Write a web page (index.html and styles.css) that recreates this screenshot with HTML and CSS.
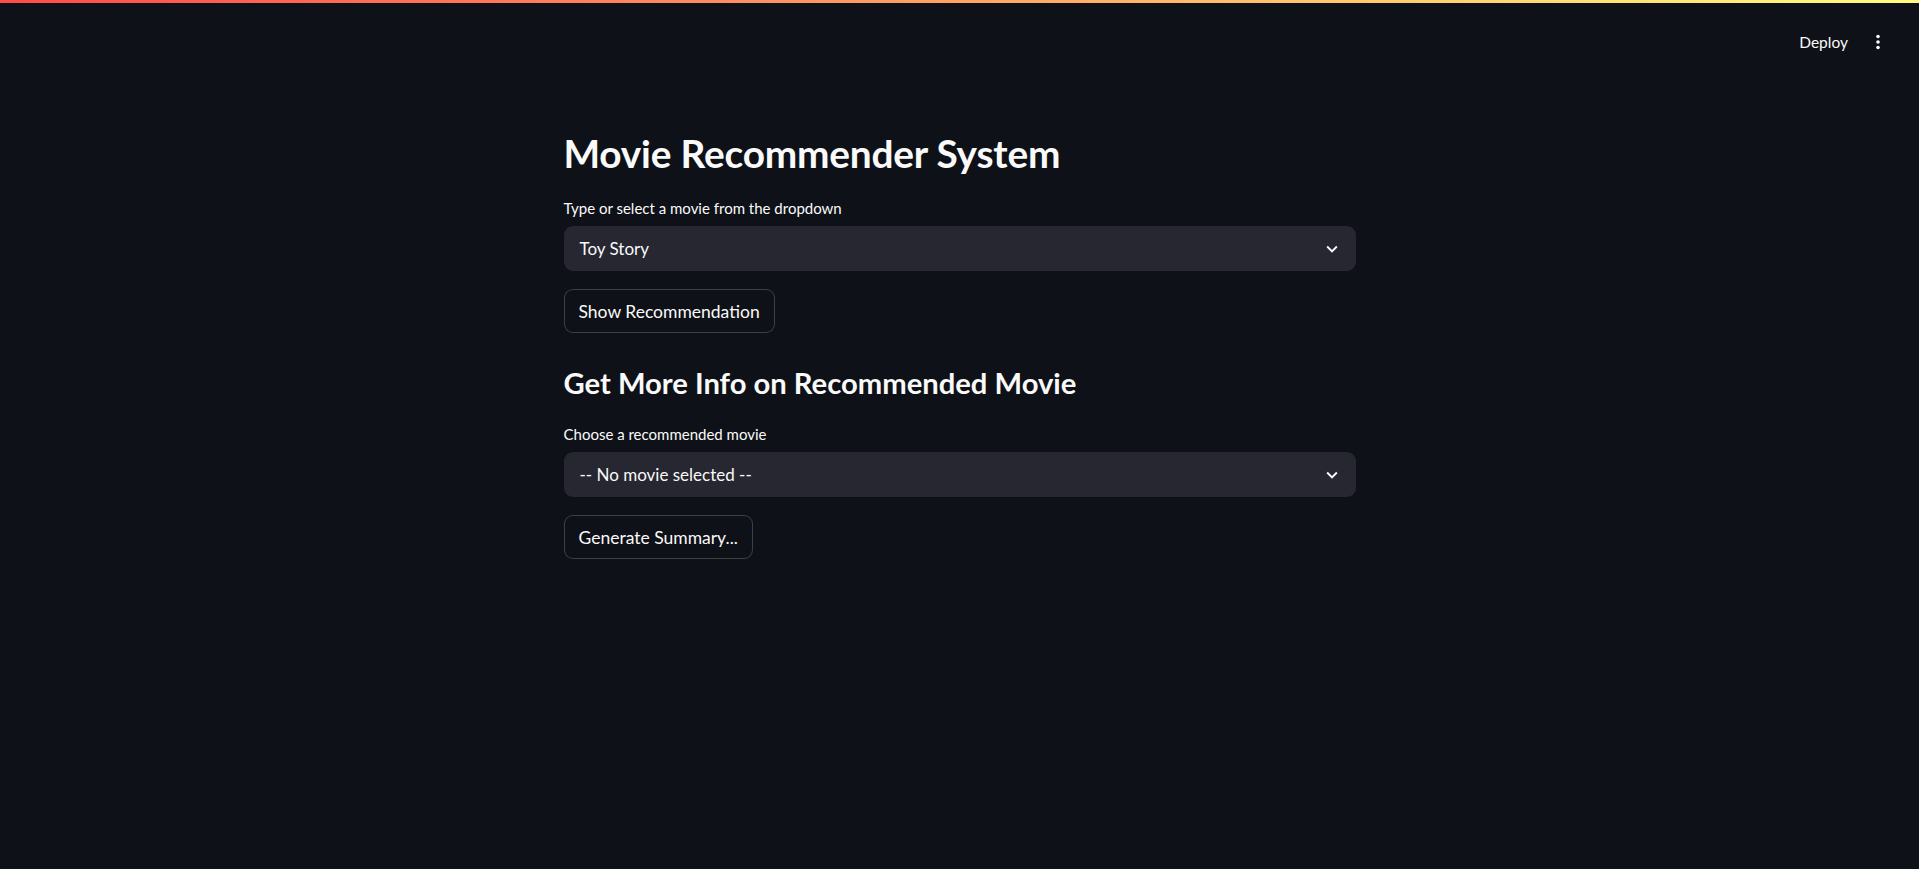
FILE: index.html
```html
<!DOCTYPE html>
<html lang="en">
<head>
<meta charset="utf-8">
<title>Movie Recommender System</title>
<link rel="stylesheet" href="styles.css">
</head>
<body>
<div class="decoration"></div>
<header class="header">
  <div class="toolbar">
    <button class="deploy">Deploy</button>
    <button class="menu" aria-label="Main menu">
      <svg width="16" height="20" viewBox="0 0 16 20"><circle cx="8" cy="4.5" r="1.8" fill="#fafafa"/><circle cx="8" cy="10" r="1.8" fill="#fafafa"/><circle cx="8" cy="15.5" r="1.8" fill="#fafafa"/></svg>
    </button>
  </div>
</header>
<main class="main">
  <div class="block">
    <h1 class="title">Movie Recommender System</h1>
    <div class="field first">
      <label class="label">Type or select a movie from the dropdown</label>
      <div class="select">
        <span class="value">Toy Story</span>
        <svg class="chev" width="22" height="22" viewBox="0 0 24 24"><path d="M16.59 8.59L12 13.17 7.41 8.59 6 10l6 6 6-6z" fill="#fafafa"/></svg>
      </div>
    </div>
    <div class="btnrow"><button class="btn">Show Recommendation</button></div>
    <h2 class="subtitle">Get More Info on Recommended Movie</h2>
    <div class="field second">
      <label class="label">Choose a recommended movie</label>
      <div class="select">
        <span class="value">-- No movie selected --</span>
        <svg class="chev" width="22" height="22" viewBox="0 0 24 24"><path d="M16.59 8.59L12 13.17 7.41 8.59 6 10l6 6 6-6z" fill="#fafafa"/></svg>
      </div>
    </div>
    <div class="btnrow"><button class="btn">Generate Summary...</button></div>
  </div>
</main>
</body>
</html>
```

FILE: styles.css
```css
html, body {
  margin: 0;
  padding: 0;
  background: #0e1117;
  color: #fafafa;
  font-family: "Lato", "Open Sans", sans-serif;
  height: 100%;
}
.decoration {
  position: fixed;
  top: 0;
  left: 0;
  right: 0;
  height: 3px;
  background: linear-gradient(90deg, #ff4b4b, #fffd80);
  z-index: 10;
}
.header {
  height: 67px;
  display: flex;
  justify-content: flex-end;
  padding-right: 29px;
}
.toolbar {
  display: flex;
  align-items: center;
  gap: 10px;
  margin-top: 29px;
  align-self: flex-start;
}
.deploy {
  background: transparent;
  border: none;
  color: #fafafa;
  font-family: inherit;
  font-size: 15.5px;
  padding: 4px 8px;
}
.menu {
  background: transparent;
  border: none;
  padding: 0 4px;
  display: flex;
}
.main {
  display: flex;
  justify-content: center;
}
.block {
  width: 792px;
  padding-top: 63px;
}
.title {
  margin: 0;
  font-size: 38.8px;
  font-weight: 700;
  line-height: 46px;
  letter-spacing: -0.2px;
}
.field {
  margin-top: 22px;
}
.field.second {
  margin-top: 24px;
}
.label {
  display: block;
  font-size: 15px;
  line-height: 20px;
  margin-bottom: 8px;
}
.select {
  height: 45px;
  background: #262730;
  border-radius: 9px;
  display: flex;
  align-items: center;
  justify-content: space-between;
  padding: 0 13px 0 16px;
  box-sizing: border-box;
  font-size: 17px;
}
.chev { display: block; }
.btnrow { margin-top: 18px; }
.btn {
  height: 44px;
  background: #0e1117;
  color: #fafafa;
  border: 1px solid rgba(250, 250, 250, 0.2);
  border-radius: 9px;
  padding: 0 14px;
  font-family: inherit;
  font-size: 17.5px;
}
.subtitle {
  margin: 32px 0 0;
  font-size: 29.2px;
  font-weight: 700;
  line-height: 35px;
}
```
